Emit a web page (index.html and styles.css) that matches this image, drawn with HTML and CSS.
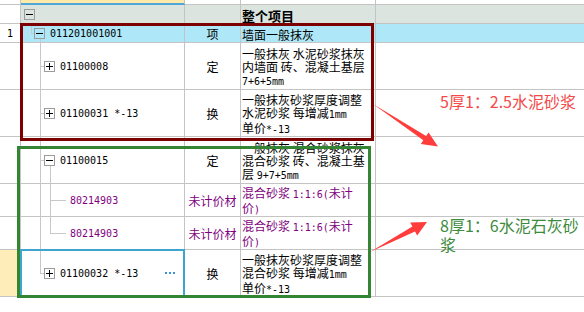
FILE: index.html
```html
<!DOCTYPE html>
<html lang="zh">
<head>
<meta charset="utf-8">
<title>整个项目</title>
<link rel="stylesheet" href="styles.css">
</head>
<body>
<div class="page">
  <div class="grid">
    <!-- strip -->
    <div class="c num"></div>
    <div class="c strip-sel"></div>
    <div class="c"></div>
    <div class="c"></div>
    <div class="c last"></div>

    <!-- header -->
    <div class="c num"></div>
    <div class="c hdr tree"><span class="tbox"></span></div>
    <div class="c hdr"></div>
    <div class="c hdr name"><b class="title">整个项目</b></div>
    <div class="c hdr last"></div>

    <!-- row 1 -->
    <div class="c num"><span class="a">1</span></div>
    <div class="c cur tree d1">
      <i class="ln v0"></i><i class="ln h0"></i><i class="ln v1 down"></i>
      <span class="tbox"></span><span class="a">011201001001</span>
    </div>
    <div class="c cur type">项</div>
    <div class="c cur name">墙面一般抹灰</div>
    <div class="c cur last"></div>

    <!-- row 2 -->
    <div class="c num"></div>
    <div class="c tree d2">
      <i class="ln v1 full"></i><i class="ln h1"></i>
      <span class="tbox plus"></span><span class="a">01100008</span>
    </div>
    <div class="c type">定</div>
    <div class="c name"><span>一般抹灰 水泥砂浆抹灰<br>内墙面 砖、混凝土基层<br><span class="a">7+6+5mm</span></span></div>
    <div class="c last"></div>

    <!-- row 3 -->
    <div class="c num"></div>
    <div class="c tree d2">
      <i class="ln v1 full"></i><i class="ln h1"></i>
      <span class="tbox plus"></span><span class="a">01100031 *-13</span>
    </div>
    <div class="c type">换</div>
    <div class="c name"><span>一般抹灰砂浆厚度调整<br>水泥砂浆 每增减<span class="a">1mm</span><br>单价<span class="a">*-13</span></span></div>
    <div class="c last"></div>

    <!-- row 4 -->
    <div class="c num"></div>
    <div class="c tree d2">
      <i class="ln v1 full"></i><i class="ln h1"></i><i class="ln v2 down"></i>
      <span class="tbox"></span><span class="a">01100015</span>
    </div>
    <div class="c type">定</div>
    <div class="c name"><span>一般抹灰 混合砂浆抹灰<br>混合砂浆 砖、混凝土基<br>层 <span class="a">9+7+5mm</span></span></div>
    <div class="c last"></div>

    <!-- row 5 -->
    <div class="c num"></div>
    <div class="c tree d3 purple">
      <i class="ln v1 full"></i><i class="ln v2 full"></i><i class="ln h2"></i>
      <span class="a">80214903</span>
    </div>
    <div class="c type purple">未计价材</div>
    <div class="c name purple"><span>混合砂浆 <span class="a">1:1:6(</span>未计<br>价<span class="a">)</span></span></div>
    <div class="c last"></div>

    <!-- row 6 -->
    <div class="c num"></div>
    <div class="c tree d3 purple">
      <i class="ln v1 full"></i><i class="ln v2 up"></i><i class="ln h2"></i>
      <span class="a">80214903</span>
    </div>
    <div class="c type purple">未计价材</div>
    <div class="c name purple"><span>混合砂浆 <span class="a">1:1:6(</span>未计<br>价<span class="a">)</span></span></div>
    <div class="c last"></div>

    <!-- row 7 -->
    <div class="c num rowsel"></div>
    <div class="c tree d2">
      <i class="ln v1 up"></i><i class="ln h1"></i>
      <span class="tbox plus"></span><span class="a">01100032 *-13</span>
      <svg class="more" width="10" height="3" viewBox="0 0 10 3"><rect x="0" y="0" width="2" height="2" fill="#3d8fd9"/><rect x="4" y="0" width="2" height="2" fill="#3d8fd9"/><rect x="8" y="0" width="2" height="2" fill="#3d8fd9"/></svg>
    </div>
    <div class="c type">换</div>
    <div class="c name"><span>一般抹灰砂浆厚度调整<br>混合砂浆 每增减<span class="a">1mm</span><br>单价<span class="a">*-13</span></span></div>
    <div class="c last"></div>
  </div>

  <div class="mark box-sel"></div>
  <div class="mark box-red"></div>
  <div class="mark box-green"></div>

  <svg class="mark arrows" width="584" height="312" viewBox="0 0 584 312">
    <polygon points="373,104 423.3,140.3 420.8,144 438,146.5 428.6,132.4 426.1,136.1" fill="#ff3d3d"/>
    <polygon points="370,252 415,231.5 417.2,235.6 427,222 410.2,222.4 412.4,226.5" fill="#ff3d3d"/>
  </svg>

  <div class="mark note note-red">5厚1：2.5水泥砂浆</div>
  <div class="mark note note-green">8厚1：6水泥石灰砂<br>浆</div>
</div>
</body>
</html>
```
FILE: styles.css
```css
* { box-sizing: border-box; }

body {
  margin: 0;
  background: #fff;
  font-family: "Noto Sans CJK SC", "Noto Sans", sans-serif;
  font-size: 12px;
  color: #000;
}

.page {
  position: relative;
  width: 584px;
  height: 312px;
  overflow: hidden;
}

.grid {
  display: grid;
  grid-template-columns: 21px 164px 56px 135px 1fr;
  grid-template-rows: 5px 19px 19px 47px 47px 47px 33px 33px 47px;
}

.c {
  position: relative;
  display: flex;
  align-items: center;
  min-width: 0;
  line-height: 13px;
  border-right: 1px solid #c4c4c4;
  border-bottom: 1px solid #c4c4c4;
  white-space: nowrap;
}
.c.last { border-right: 0; }

.strip-sel {
  background: #fde9a9;
  border-bottom: 2px solid #4fa7d8;
}
.hdr { background: #dbe4df; }
.cur { background: #aee8f8; }
.rowsel { background: #feedb9; }

.num { justify-content: center; }
.type { justify-content: center; }
.name { padding-left: 1px; padding-top: 2px; }
.title { font-size: 13px; font-weight: 700; }

.purple { color: #800080; }

.a {
  font-family: "DejaVu Sans Mono", "Liberation Mono", monospace;
  font-size: 10px;
}

/* tree */
.tree { padding-left: 3px; }
.tree.d1 { padding-left: 13px; }
.tree.d2 { padding-left: 23px; }
.tree.d3 { padding-left: 49px; }

.tbox {
  position: relative;
  flex: none;
  width: 11px;
  height: 11px;
  margin-right: 5px;
  border: 1px solid #9c9c9c;
}
.tbox::before {
  content: "";
  position: absolute;
  left: 1px;
  top: 4px;
  width: 7px;
  height: 1px;
  background: #000;
}
.tbox.plus::after {
  content: "";
  position: absolute;
  left: 4px;
  top: 1px;
  width: 1px;
  height: 7px;
  background: #000;
}

.ln { position: absolute; background: #c8c8c8; }
.v0 { left: 10px; top: 0; width: 1px; height: 9px; }
.h0 { left: 10px; top: 9px; width: 3px; height: 1px; }
.v1 { left: 19px; width: 1px; }
.v2 { left: 29px; width: 1px; }
.full { top: 0; bottom: -1px; }
.v1.down { top: 15px; bottom: -1px; }
.v1.up { top: 0; height: 23px; }
.v2.down { top: 29px; bottom: -1px; }
.v2.up { top: 0; height: 16px; }
.h1 { left: 19px; top: 50%; width: 4px; height: 1px; }
.h2 { left: 29px; top: 50%; width: 16px; height: 1px; }

.more { margin-left: auto; margin-right: 9px; }

/* overlays */
.mark { position: absolute; pointer-events: none; }
.box-sel {
  left: 20px; top: 249px; width: 165px; height: 48px;
  border: 2px solid #3ea5d1;
}
.box-red {
  left: 20px; top: 23px; width: 354px; height: 118px;
  border: 3px solid #7d0000;
}
.box-green {
  left: 17px; top: 146px; width: 354px; height: 152px;
  border: 3px solid #338533;
}
.arrows { left: 0; top: 0; }

.note {
  font-size: 16px;
  line-height: 19px;
  white-space: nowrap;
}
.note-red { left: 440px; top: 92px; color: #f44a4a; }
.note-green { left: 440px; top: 216px; color: #3d8a3d; }
```
